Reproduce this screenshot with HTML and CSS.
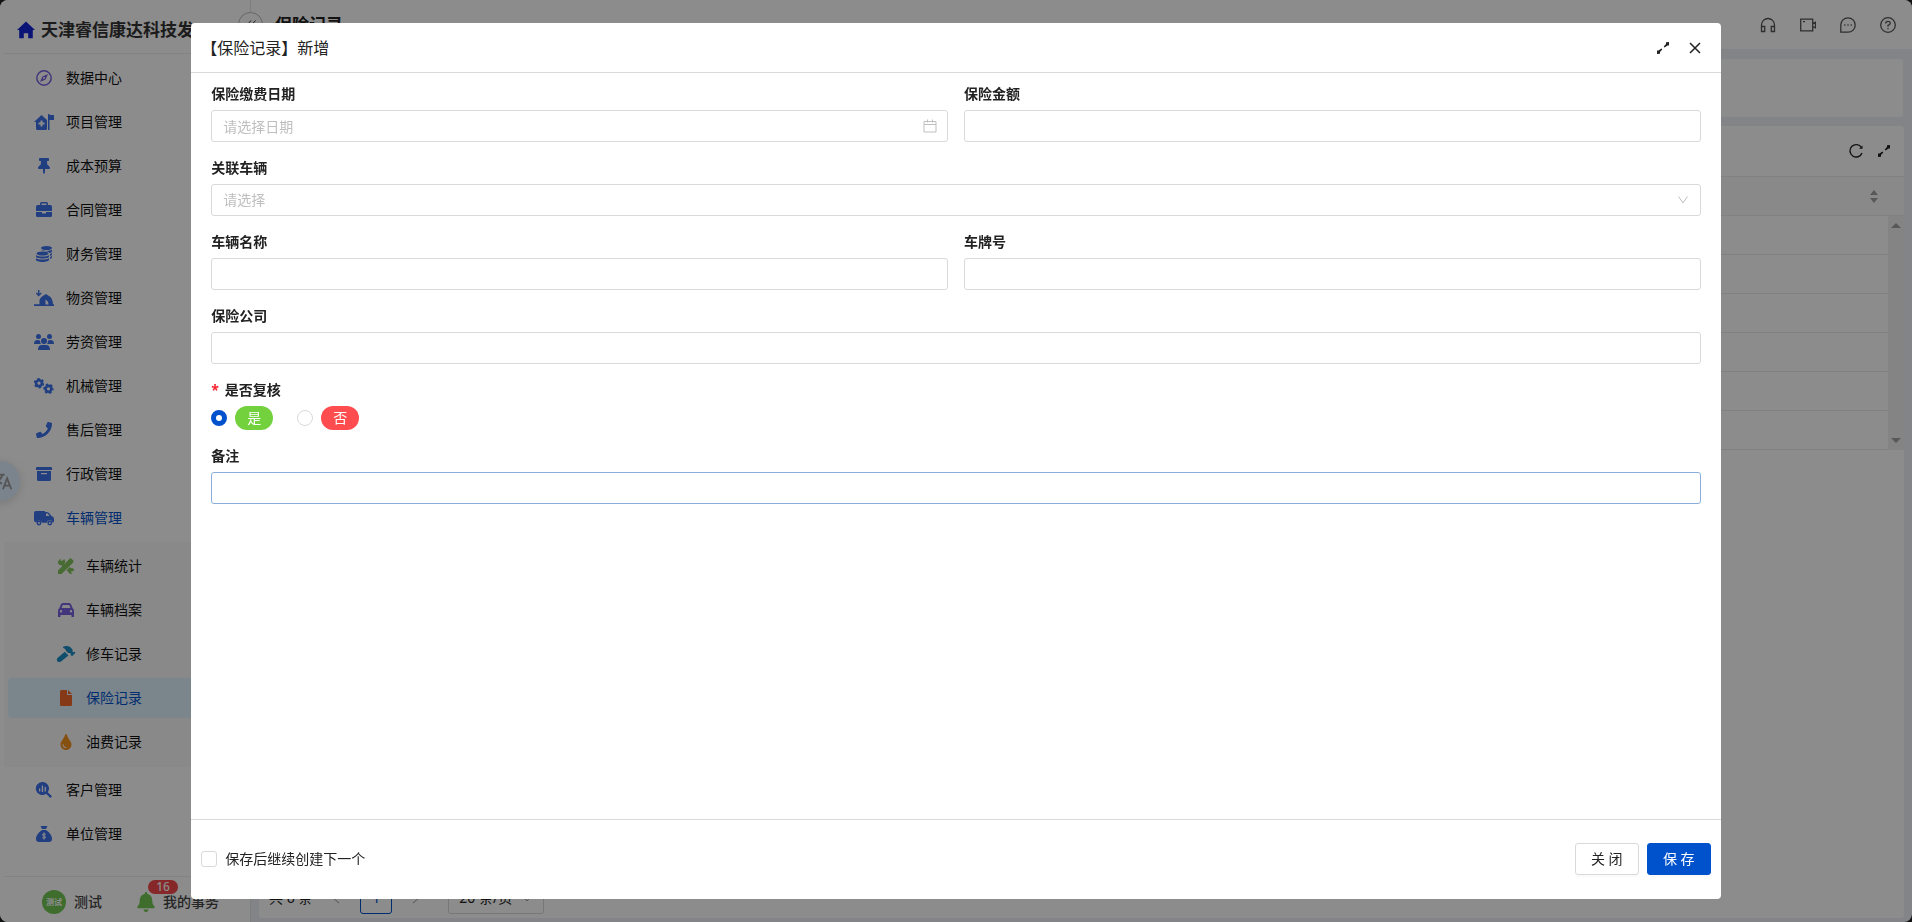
FILE: index.html
```html
<!DOCTYPE html>
<html lang="zh-CN">
<head>
  <meta charset="UTF-8">
  <title>保险记录</title>
  <link rel="stylesheet" href="styles.css">
</head>
<body>
<div class="app">
  <aside class="sidebar">
    <div class="brand">
      <svg class="brand-icon" viewBox="0 0 18 18"><path d="M9 0.5L0 9h2.2v8.2h4.6v-5h4.4v5h4.6V9H18z"/></svg>
      <span>天津睿信康达科技发</span>
    </div>

    <nav class="menu">
      <a class="menu-item" href="#">
        <svg class="icon violet" viewBox="0 0 20 16"><circle cx="10" cy="8" r="7.2" fill="none" stroke="currentColor" stroke-width="1.5"/><path fill-rule="evenodd" d="M14 4l-2.4 5.6L6 12l2.4-5.6zM10 7a1 1 0 1 0 0 2 1 1 0 0 0 0-2z"/></svg>
        <span>数据中心</span>
      </a>
      <a class="menu-item" href="#">
        <svg class="icon" viewBox="0 0 20 16"><path fill-rule="evenodd" d="M7.500 1L0 8h2v6.500q0 1.500 1.500 1.500H11.500q1.500 0 1.500-1.500V6zM6.500 6.500h2v2h2v2h-2v2h-2v-2h-2v-2h2zM14 0h1.500v1H20v5h-4.500v10H14z"/></svg>
        <span>项目管理</span>
      </a>
      <a class="menu-item" href="#">
        <svg class="icon" viewBox="-128 0 640 512"><path d="M298 214L286 96h42c13 0 24-11 24-24V24c0-13-11-24-24-24H56C43 0 32 11 32 24v48c0 13 11 24 24 24h42L86 214C37 237 0 277 0 328c0 13 11 24 24 24h136v104l25 52c3 6 11 6 14 0l25-52V352h136c13 0 24-11 24-24 0-51-38-91-86-114z"/></svg>
        <span>成本预算</span>
      </a>
      <a class="menu-item" href="#">
        <svg class="icon" viewBox="0 0 20 16"><path fill-rule="evenodd" d="M6 3V1.500Q6 0 7.500 0h5Q14 0 14 1.500V3h2.500Q18 3 18 4.500V9H2V4.500Q2 3 3.500 3zM7.500 3h5V1.500h-5zM2 10h6v1.500h4V10h6v3.500q0 1.500-1.500 1.500h-13Q2 15 2 13.500z"/></svg>
        <span>合同管理</span>
      </a>
      <a class="menu-item" href="#">
        <svg class="icon" viewBox="0 0 20 16"><ellipse cx="12.500" cy="2" rx="5.500" ry="2"/><path d="M18 3.500v1.500c0 1-1 1.700-2.500 2-.8-1.300-3-2-6-2C8 4.700 7 4.200 7 3.500c1 1 3 1.400 5.500 1.400S17 4.500 18 3.500zM18 6.500V8c0 1-1 1.700-2 2V8c1-.3 1.600-.8 2-1.500zM18 9.500V11c0 1-1 1.700-2 2v-2c1-.3 1.600-.8 2-1.500z"/><ellipse cx="8.500" cy="7.500" rx="6" ry="2"/><path d="M2 9c1 1 3.500 1.500 6.500 1.500S14 10 15 9v1.500c0 1.200-3 2-6.500 2S2 11.700 2 10.500zM2 12c1 1 3.500 1.500 6.500 1.500S14 13 15 12v1.800c0 1.300-3 2.200-6.500 2.200S2 15.100 2 13.800z"/></svg>
        <span>财务管理</span>
      </a>
      <a class="menu-item" href="#">
        <svg class="icon" viewBox="0 0 20 16"><path d="M4 0h1.400v3.800l1.200-1.200 1 1L4.700 6.500 1.800 3.600l1-1L4 3.800z"/><path fill-rule="evenodd" d="M0 14.200h5.500V10Q6 8 8 6.500l4-2.500 4.500 3Q18.500 9 19 14.200h1V16H0zM11.500 9.500v5h3q0-3.500-3-5z"/></svg>
        <span>物资管理</span>
      </a>
      <a class="menu-item" href="#">
        <svg class="icon" viewBox="0 0 20 16"><circle cx="4.500" cy="2.500" r="2.500"/><circle cx="15.500" cy="2.500" r="2.500"/><circle cx="10" cy="7" r="3"/><path d="M0 10q0-4 3.500-4 2 0 2.700 1-.4 2 .9 3zM20 10q0-4-3.500-4-2 0-2.700 1 .4 2-.9 3zM4 16q0-5 4-5h4q4 0 4 5z"/></svg>
        <span>劳资管理</span>
      </a>
      <a class="menu-item" href="#">
        <svg class="icon" viewBox="0 0 20 16"><g fill="none" stroke="currentColor"><circle cx="5" cy="5.200" r="2.900" stroke-width="2.600"/><circle cx="5" cy="5.200" r="4.300" stroke-width="1.800" stroke-dasharray="2.400 2.100"/><circle cx="14.500" cy="10.800" r="2.900" stroke-width="2.600"/><circle cx="14.500" cy="10.800" r="4.300" stroke-width="1.800" stroke-dasharray="2.400 2.100" stroke-dashoffset="1"/></g></svg>
        <span>机械管理</span>
      </a>
      <a class="menu-item" href="#">
        <svg class="icon" viewBox="-64 0 640 512"><path d="M493 25L389 1c-11-3-23 3-27 14l-48 112c-4 9-1 21 7 28l60 49c-36 77-99 141-177 178l-49-61c-7-8-19-11-28-7L15 362c-11 4-17 16-14 27l24 104c2 11 12 19 23 19 256 0 464-208 464-464 0-11-8-21-19-23z"/></svg>
        <span>售后管理</span>
      </a>
      <a class="menu-item" href="#">
        <svg class="icon" viewBox="0 0 20 16"><path fill-rule="evenodd" d="M3 1h14q1 0 1 1v2H2V2q0-1 1-1zM3 5h14v8.500q0 1.500-1.500 1.500h-11Q3 15 3 13.500zM7 7v1.200h6V7z"/></svg>
        <span>行政管理</span>
      </a>
      <a class="menu-item current" href="#">
        <svg class="icon" viewBox="0 0 20 16"><path fill-rule="evenodd" d="M2 1h8q1 0 1.500 1H13q1.500 0 2.500 1.500L17.500 6q2.500 .5 2.500 3v2q0 1.500-1.300 1.800a3 3 0 0 0-5.900 0H8a3 3 0 0 0-5.800-.3Q0 12 0 10V3q0-2 2-2zM12 3.500V6h3.500l-1.800-2.500z"/><circle cx="5" cy="13" r="1.700" fill="none" stroke="currentColor" stroke-width="1.500"/><circle cx="15.800" cy="13" r="1.700" fill="none" stroke="currentColor" stroke-width="1.500"/></svg>
        <span>车辆管理</span>
      </a>
      <div class="submenu">
        <a class="menu-item" href="#">
          <svg class="icon green" viewBox="0 0 20 16"><path d="M2 16v-3.500L13.300 1q1.200-1.300 2.500 0l1.200 1.200q1.300 1.300 0 2.500L5.500 16z"/><path d="M4.500 .3v2.500h2L8.300 1Q10 4 8.300 5.500L9 6.200 6.700 8.500 5.500 7.300Q2 7.500 2 3.500L4.500 .3zM10.500 12.200l3.300-3.300 1.200 1.300q3-.7 3 3l-2.300-.2-.6 1.500 1.200 1.300q-3.500.7-4.300-2.200z"/></svg>
          <span>车辆统计</span>
        </a>
        <a class="menu-item" href="#">
          <svg class="icon violet" viewBox="0 0 20 16"><path fill-rule="evenodd" d="M3.300 6.200L4.800 2.500Q5.500 1 7 1h6q1.500 0 2.200 1.500l1.500 3.700Q18 7 18 8.500V15h-2.500v-2h-11v2H2V8.500Q2 7 3.300 6.200zM5.500 6h9l-1.300-3H6.800zM5 8a1.200 1.200 0 1 0 0 2.400A1.200 1.200 0 0 0 5 8zM15 8a1.200 1.200 0 1 0 0 2.400A1.200 1.200 0 0 0 15 8z"/></svg>
          <span>车辆档案</span>
        </a>
        <a class="menu-item" href="#">
          <svg class="icon teal" viewBox="0 0 20 16"><path d="M7 1Q11-1.200 14.500 1.200L16.500 3.500v2l1 .7 1-.5 1 1-3.500 3.500-1.300-1.200.3-1.200L13.500 7H12L10 4.800Q9.800 2.500 7 1.700zM8.800 5.800l3.700 3.700L5 15.500q-2 1.200-3.500 0-1.400-1.700 0-3.500z"/></svg>
          <span>修车记录</span>
        </a>
        <a class="menu-item active" href="#">
          <svg class="icon orange" viewBox="0 0 20 16"><path d="M5.500 0H11v5h5v9.500q0 1.500-1.500 1.500h-9Q4 16 4 14.500v-13Q4 0 5.500 0zM12 0l4 4h-4z"/></svg>
          <span>保险记录</span>
        </a>
        <a class="menu-item" href="#">
          <svg class="icon amber" viewBox="-144 0 640 512"><path d="M205 22c-8-29-49-30-58 0C100 180 0 223 0 334c0 98 79 178 176 178s176-80 176-178c0-112-100-153-147-312zM176 448c-62 0-112-50-112-112 0-9 7-16 16-16s16 7 16 16c0 44 36 80 80 80 9 0 16 7 16 16s-7 16-16 16z"/></svg>
          <span>油费记录</span>
        </a>
      </div>
      <a class="menu-item" href="#">
        <svg class="icon" viewBox="0 0 20 16"><path fill-rule="evenodd" d="M8.500 0a6.500 6.500 0 0 1 5.300 10.200L18 14.300 16.300 16l-4.200-4.200A6.500 6.500 0 1 1 8.500 0zM5 6.500v3h1.300v-3zM7.800 3.500v6.500h1.300V3.500zM10.600 5v4.500h1.300V5z"/></svg>
        <span>客户管理</span>
      </a>
      <a class="menu-item" href="#">
        <svg class="icon" viewBox="0 0 20 16"><path d="M6.500 0h7L12 3H8zM8 4h4q6 4 6 9 0 3-3 3H5q-3 0-3-3 0-5 6-9z"/><path d="M11.800 8.300Q10 7.300 8.800 8.200q-.8 1.200 1.200 1.700t1.300 1.800q-1.200 1-3 0M10 6.500v7" fill="none" stroke="#fff" stroke-width="1"/></svg>
        <span>单位管理</span>
      </a>
    </nav>

    <div class="sidebar-footer">
      <span class="avatar">测试</span>
      <span class="user-name">测试</span>
      <a class="todo" href="#">
        <svg class="bell" viewBox="0 0 448 512"><path d="M224 512c35 0 64-29 64-64H160c0 35 29 64 64 64zM439 362c-19-21-55-52-55-154 0-78-54-140-128-155V32c0-18-14-32-32-32s-32 14-32 32v21C119 68 64 130 64 208c0 102-36 133-55 154-6 7-9 14-9 22 0 16 13 32 32 32h384c19 0 32-16 32-32 0-8-3-15-9-22z"/></svg>
        <span>我的事务</span>
        <span class="badge">16</span>
      </a>
    </div>
  </aside>

  <main class="main">
    <header class="topbar">
      <button class="collapse" type="button" aria-label="收起">
        <svg viewBox="0 0 12 12"><path d="M6 1.500L2 6l4 4.500M10.500 1.500L6.500 6l4 4.500"/></svg>
      </button>
      <h1>保险记录</h1>
      <div class="top-icons">
        <svg viewBox="0 0 16 16"><path d="M1.500 14V8a6.500 6.500 0 0 1 13 0v6M1.500 9.500h3.200v5H1.500zM11.300 9.500h3.200v5h-3.200z"/></svg>
        <svg viewBox="0 0 16 16"><path d="M.7 2.200h12v11.600H.7zM12.700 6.500l2.800-1.300v5.600l-2.800-1.300M3 4.700h2"/></svg>
        <svg viewBox="0 0 16 16"><path d="M8 .8a7.200 7.200 0 1 1 0 14.400H.8V8A7.200 7.200 0 0 1 8 .8zM4.200 8h1.200M7.400 8h1.200M10.600 8h1.200"/></svg>
        <svg viewBox="0 0 16 16"><circle cx="8" cy="8" r="7.300"/><path d="M5.700 6.500Q5.800 4.300 8 4.300t2.300 2Q10.300 7.500 8 8.400v1.400M8 11v1.300"/></svg>
      </div>
    </header>

    <section class="card filter-card"></section>

    <section class="card table-card">
      <div class="toolbar">
        <button class="icon-button" type="button" aria-label="刷新">
          <svg viewBox="0 0 16 16"><path d="M13.500 4.600A6.200 6.200 0 1 0 14 10" fill="none" stroke="currentColor" stroke-width="1.400"/><path d="M14.500 2.500v3.300h-3.300z"/></svg>
        </button>
        <button class="icon-button" type="button" aria-label="全屏">
          <svg viewBox="0 0 16 16"><path d="M14 2v3.500h-1.500L9.600 7.500l-.9-.9L11 4V2.300zM2 14v-3.500h1.500l2.900-2 .9.900L5 12v1.700z"/></svg>
        </button>
      </div>
      <div class="table-area">
        <table>
          <thead>
            <tr><th><svg class="sorter" viewBox="0 0 8 13"><path d="M0 5l4-5 4 5zM0 8h8l-4 5z"/></svg></th></tr>
          </thead>
          <tbody>
            <tr><td></td></tr>
            <tr><td></td></tr>
            <tr><td></td></tr>
            <tr><td></td></tr>
            <tr><td></td></tr>
            <tr><td></td></tr>
          </tbody>
        </table>
        <div class="scrollbar">
          <svg viewBox="0 0 10 5"><path d="M0 5l5-5 5 5z"/></svg>
          <svg viewBox="0 0 10 5"><path d="M0 0h10L5 5z"/></svg>
        </div>
      </div>
      <div class="pagination">
        <span>共 6 条</span>
        <button class="page-arrow" type="button" aria-label="上一页"><svg viewBox="0 0 12 12"><path d="M9 1L3 6l6 5"/></svg></button>
        <button class="page-number" type="button">1</button>
        <button class="page-arrow" type="button" aria-label="下一页"><svg viewBox="0 0 12 12"><path d="M3 1l6 5-6 5"/></svg></button>
        <span class="page-size">
          <select aria-label="每页条数"><option>20 条/页</option></select>
          <svg viewBox="0 0 12 12"><path d="M1 3l5 6 5-6"/></svg>
        </span>
      </div>
    </section>
  </main>

  <button class="translate" type="button" aria-label="翻译">
    <svg viewBox="0 0 24 24"><path d="M1 5h13M7.500 2v3M11.500 5Q9 12 2 16M4 8q2 5 7 7M12 21l4.500-12L21 21M13.500 17h6"/></svg>
  </button>
</div>

<div class="mask">
  <form class="modal" role="dialog" aria-labelledby="modal-title">
    <div class="modal-header">
      <h2 id="modal-title">【保险记录】新增</h2>
      <button class="icon-button" type="button" aria-label="全屏">
        <svg viewBox="0 0 16 16"><path d="M14 2v3.500h-1.500L9.600 7.500l-.9-.9L11 4V2.300zM2 14v-3.500h1.500l2.900-2 .9.900L5 12v1.700z"/></svg>
      </button>
      <button class="icon-button" type="button" aria-label="关闭">
        <svg viewBox="0 0 16 16"><path d="M3 3l10 10M13 3L3 13" fill="none" stroke="currentColor" stroke-width="1.500"/></svg>
      </button>
    </div>

    <div class="modal-body">
      <div class="field">
        <label for="pay-date">保险缴费日期</label>
        <div class="control">
          <input id="pay-date" type="text" placeholder="请选择日期">
          <svg viewBox="0 0 14 14"><path d="M1 2.500h12v10.500H1zM1 5.500h12M4.500 .5v3M9.500 .5v3"/></svg>
        </div>
      </div>
      <div class="field">
        <label for="amount">保险金额</label>
        <input id="amount" type="text">
      </div>
      <div class="field wide">
        <label for="vehicle">关联车辆</label>
        <div class="control">
          <select id="vehicle"><option>请选择</option></select>
          <svg viewBox="0 0 14 14"><path d="M2.500 3.500L7 10l4.500-6.500"/></svg>
        </div>
      </div>
      <div class="field">
        <label for="vehicle-name">车辆名称</label>
        <input id="vehicle-name" type="text">
      </div>
      <div class="field">
        <label for="plate">车牌号</label>
        <input id="plate" type="text">
      </div>
      <div class="field wide">
        <label for="company">保险公司</label>
        <input id="company" type="text">
      </div>
      <fieldset class="field wide">
        <legend><span class="required">*</span>是否复核</legend>
        <div class="radios">
          <label class="radio"><input type="radio" name="review" checked><span class="tag yes">是</span></label>
          <label class="radio"><input type="radio" name="review"><span class="tag no">否</span></label>
        </div>
      </fieldset>
      <div class="field wide">
        <label for="remark">备注</label>
        <input id="remark" class="focused" type="text">
      </div>
    </div>

    <div class="modal-footer">
      <label class="keep"><input type="checkbox"><span>保存后继续创建下一个</span></label>
      <button class="btn" type="button">关 闭</button>
      <button class="btn primary" type="button">保 存</button>
    </div>
  </form>
</div>
</body>
</html>
```

FILE: styles.css
```css
* {
  box-sizing: border-box;
}

body {
  margin: 0;
  background: #222;
  color: #222;
  font-family: "Noto Sans", "Noto Sans CJK SC", sans-serif;
  font-size: 14px;
  line-height: 22px;
}

button,
input,
select {
  font: inherit;
  color: inherit;
}

button {
  padding: 0;
  border: 0;
  background: none;
  cursor: pointer;
}

a {
  color: inherit;
  text-decoration: none;
}

svg {
  display: block;
  flex: none;
  fill: currentColor;
}

.app {
  display: flex;
  height: 100vh;
  overflow: hidden;
  border-radius: 8px;
  background: #edf1f7;
}

/* sidebar */
.sidebar {
  display: flex;
  flex-direction: column;
  flex: none;
  width: 251px;
  padding-left: 4px;
  background: #fff;
  border-right: 1px solid #e4e6ea;
}

.brand {
  display: flex;
  align-items: center;
  gap: 6px;
  height: 54px;
  padding: 6px 0 0 13px;
  border-bottom: 1px solid #eee;
  font-size: 17px;
  font-weight: bold;
  color: #333;
  white-space: nowrap;
}

.brand-icon {
  width: 18px;
  height: 18px;
  color: #1325d8;
}

.menu {
  flex: 1;
  padding-top: 4px;
  color: #111;
}

.menu-item {
  display: flex;
  align-items: center;
  gap: 12px;
  height: 40px;
  margin: 0 4px 4px;
  padding-left: 26px;
  border-radius: 4px;
}

.icon {
  width: 20px;
  height: 16px;
  color: #3c72ec;
}

.current {
  color: #0052cc;
}

.submenu {
  padding: 4px 0 1px;
  margin-bottom: 3px;
  background: #fafafa;
}

.submenu .menu-item {
  gap: 10px;
  padding-left: 48px;
}

.submenu .active {
  background: #e0f2ff;
  color: #0052cc;
}

.violet {
  color: #7b61e0;
}

.green {
  color: #82c45c;
}

.teal {
  color: #1b8cc4;
}

.orange {
  color: #f2682a;
}

.amber {
  color: #f59220;
}

.sidebar-footer {
  display: flex;
  align-items: center;
  height: 46px;
  padding: 4px 0 0 38px;
  border-top: 1px solid #eee;
  font-weight: 500;
  color: #444;
}

.avatar {
  width: 24px;
  height: 24px;
  border-radius: 50%;
  background: #71c653;
  color: #fff;
  font-size: 8px;
  font-weight: bold;
  line-height: 24px;
  text-align: center;
}

.user-name {
  margin: 0 35px 0 8px;
}

.todo {
  display: flex;
  align-items: center;
  gap: 8px;
  position: relative;
}

.bell {
  width: 18px;
  height: 20px;
  color: #71c653;
}

.badge {
  position: absolute;
  top: -11px;
  left: 11px;
  width: 30px;
  height: 14px;
  border-radius: 7px;
  background: #f5484c;
  color: #fff;
  font-size: 12px;
  line-height: 14px;
  text-align: center;
}

/* page behind the dialog */
.main {
  display: flex;
  flex-direction: column;
  flex: 1;
  padding-bottom: 4px;
}

.topbar {
  display: flex;
  align-items: center;
  justify-content: space-between;
  position: relative;
  height: 49px;
  padding: 0 16px 0 24px;
  background: #fff;
}

.topbar h1 {
  margin: 0;
  font-size: 17px;
}

.collapse {
  display: flex;
  align-items: center;
  justify-content: center;
  position: absolute;
  top: 12px;
  left: -13px;
  width: 25px;
  height: 25px;
  border: 1px solid #bbb;
  border-radius: 50%;
  background: #fff;
}

.collapse svg {
  width: 12px;
  height: 12px;
  fill: none;
  stroke: #333;
}

.top-icons {
  display: flex;
  gap: 24px;
}

.top-icons svg {
  width: 16px;
  height: 16px;
  fill: none;
  stroke: #555;
  stroke-width: 1.3;
}

.card {
  margin: 0 9px 0 8px;
  border-radius: 3px;
  background: #fff;
}

.filter-card {
  height: 58px;
  margin-top: 10px;
}

.table-card {
  display: flex;
  flex-direction: column;
  flex: 1;
  margin-top: 9px;
  margin-right: 8px;
}

.toolbar {
  display: flex;
  align-items: center;
  justify-content: flex-end;
  gap: 12px;
  height: 50px;
  padding-right: 12px;
}

.icon-button {
  color: #222;
}

.icon-button svg {
  width: 16px;
  height: 16px;
}

.table-area {
  display: flex;
  position: relative;
}

table {
  flex: 1;
  border-spacing: 0;
}

th,
td {
  height: 39px;
  padding: 0;
  border-bottom: 1px solid #ebebeb;
}

th {
  height: 40px;
  padding-right: 26px;
  border-top: 1px solid #ebebeb;
  background: #fafafa;
}

.sorter {
  width: 8px;
  height: 13px;
  margin-left: auto;
  color: #a0a0a0;
}

/* track runs beside the body rows only */
.scrollbar {
  display: flex;
  flex-direction: column;
  align-items: center;
  justify-content: space-between;
  position: absolute;
  top: 40px;
  right: 0;
  bottom: 0;
  width: 16px;
  padding: 7px 0;
  background: #f0f0f0;
  color: #a0a0a0;
}

.scrollbar svg {
  width: 10px;
  height: 5px;
}

.pagination {
  display: flex;
  align-items: center;
  margin-top: auto;
  padding: 0 10px 4px;
}

.page-arrow {
  display: flex;
  justify-content: center;
  width: 48px;
}

.page-number {
  width: 32px;
  height: 32px;
  border: 1px solid #0052cc;
  border-radius: 3px;
  color: #0052cc;
}

.pagination svg {
  width: 12px;
  height: 12px;
  fill: none;
  stroke: #999;
}

.page-size {
  display: flex;
  align-items: center;
  width: 96px;
  height: 32px;
  margin-left: 8px;
  padding: 0 10px;
  border: 1px solid #d9d9d9;
  border-radius: 3px;
}

.page-size select {
  flex: 1;
  min-width: 0;
  padding: 0;
  border: 0;
  appearance: none;
  background: none;
}

.translate {
  position: absolute;
  top: 461px;
  left: -20px;
  width: 40px;
  height: 40px;
  padding-left: 12px;
  border-radius: 50%;
  background: #e0f0ff;
  box-shadow: 0 2px 10px rgba(0, 0, 0, 0.15);
}

.translate svg {
  width: 22px;
  height: 22px;
  fill: none;
  stroke: #9a9a9a;
  stroke-width: 2;
}

/* dialog */
.mask {
  display: flex;
  align-items: center;
  justify-content: center;
  position: fixed;
  inset: 0;
  background: rgba(0, 0, 0, 0.45);
}

.modal {
  display: flex;
  flex-direction: column;
  width: 80%;
  height: 95%;
  border-radius: 4px;
  background: #fff;
}

.modal-header {
  display: flex;
  align-items: center;
  gap: 16px;
  height: 50px;
  padding: 0 18px 0 10px;
  border-bottom: 1px solid #d9d9d9;
}

.modal-header h2 {
  flex: 1;
  margin: 0;
  font-size: 16px;
  font-weight: normal;
}

.modal-body {
  display: grid;
  grid-template-columns: 1fr 1fr;
  align-content: start;
  gap: 15px 16px;
  flex: 1;
  padding: 10px 20px;
}

.field {
  display: flex;
  flex-direction: column;
  gap: 5px;
  min-width: 0;
  margin: 0;
  padding: 0;
  border: 0;
}

.wide {
  grid-column: 1 / -1;
}

.field > label,
legend {
  padding: 0;
  font-weight: bold;
}

.field > input,
.control input,
.control select {
  width: 100%;
  height: 32px;
  padding: 0 11px;
  border: 1px solid #d9d9d9;
  border-radius: 3px;
  appearance: none;
  background: #fff;
  outline: none;
}

.field > .focused {
  border-color: #8aaddb;
}

.control {
  position: relative;
}

.control select,
::placeholder {
  color: #bfbfbf;
}

.control svg {
  position: absolute;
  top: 9px;
  right: 11px;
  width: 14px;
  height: 14px;
  fill: none;
  stroke: #bfbfbf;
}

.required {
  margin-right: 6px;
  color: #f5222d;
}

.radios {
  display: flex;
  gap: 24px;
  margin-top: 5px;
}

.radio,
.keep {
  display: flex;
  align-items: center;
  gap: 8px;
}

.radio input {
  width: 16px;
  height: 16px;
  margin: 0;
  border: 1px solid #d9d9d9;
  border-radius: 50%;
  appearance: none;
}

.radio input:checked {
  border: 5px solid #0052cc;
}

.tag {
  width: 38px;
  border-radius: 12px;
  color: #fff;
  line-height: 24px;
  text-align: center;
}

.yes {
  background: #73d13d;
}

.no {
  background: #ff4d4f;
}

.modal-footer {
  display: flex;
  align-items: center;
  gap: 8px;
  height: 80px;
  padding: 0 10px;
  border-top: 1px solid #d9d9d9;
}

.keep {
  margin-right: auto;
}

.keep input {
  width: 16px;
  height: 16px;
  margin: 0;
  border: 1px solid #d9d9d9;
  border-radius: 3px;
  appearance: none;
}

.btn {
  width: 64px;
  height: 32px;
  border: 1px solid #d9d9d9;
  border-radius: 3px;
  box-shadow: 0 2px 0 rgba(0, 0, 0, 0.02);
}

.primary {
  border-color: #0052cc;
  background: #0052cc;
  color: #fff;
}
```
